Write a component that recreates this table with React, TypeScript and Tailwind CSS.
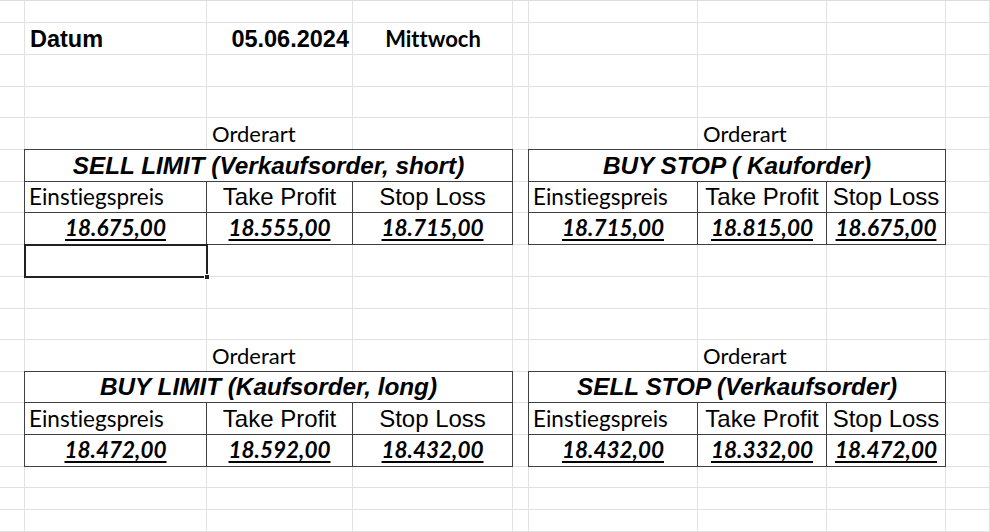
import React from "react";

// Excel-artige Tabelle: Spaltenbreiten und Zeilenhöhen wie im Screenshot
const COLS = 9;
const ROWS = 19;

const arial = "font-['Liberation_Sans',Arial,sans-serif]";
const calibri = "font-['Lato','Open_Sans',sans-serif] [font-variant-ligatures:none]";

interface OrderTable {
  pos: string;
  title: string;
  entry: string;
  tp: string;
  sl: string;
}

const tables: OrderTable[] = [
  { pos: "col-start-2 col-span-3 row-start-6 row-span-3", title: "SELL LIMIT (Verkaufsorder, short)", entry: "18.675,00", tp: "18.555,00", sl: "18.715,00" },
  { pos: "col-start-6 col-span-3 row-start-6 row-span-3", title: "BUY STOP ( Kauforder)", entry: "18.715,00", tp: "18.815,00", sl: "18.675,00" },
  { pos: "col-start-2 col-span-3 row-start-13 row-span-3", title: "BUY LIMIT (Kaufsorder, long)", entry: "18.472,00", tp: "18.592,00", sl: "18.432,00" },
  { pos: "col-start-6 col-span-3 row-start-13 row-span-3", title: "SELL STOP (Verkaufsorder)", entry: "18.432,00", tp: "18.332,00", sl: "18.472,00" },
];

const gridTpl =
  "grid grid-cols-[25px_182px_146px_160px_16px_169px_129px_119px_44px] grid-rows-[22px_32px_32px_31px_32px_32px_31px_32px_32px_32px_31px_32px_31px_32px_32px_21px_22px_22px_1px]";

const cell = "-mt-px -ml-px border border-[#404040] bg-white flex items-end leading-[24px] pb-[3px] text-black";

function Table({ t }: { t: OrderTable }) {
  return (
    <div className={`${t.pos} grid grid-cols-subgrid grid-rows-subgrid`}>
      <div className={`${cell} col-span-3 justify-center ${arial} font-bold italic text-[24.3px] whitespace-nowrap`}>{t.title}</div>
      <div className={`${cell} pl-[4px] ${calibri} text-[22.5px]`}>Einstiegspreis</div>
      <div className={`${cell} justify-center ${arial} text-[24px] whitespace-nowrap`}>Take Profit</div>
      <div className={`${cell} justify-center ${arial} text-[24px] whitespace-nowrap`}>Stop Loss</div>
      {[t.entry, t.tp, t.sl].map((v, i) => (
        <div key={i} className={`${cell} justify-center pb-[4px] ${calibri} font-bold italic text-[22.5px]`}>
          <span className="underline decoration-[1.5px] underline-offset-[3px]">{v}</span>
        </div>
      ))}
    </div>
  );
}

export default function App() {
  return (
    <div className="w-[990px] h-[532px] overflow-hidden bg-white grid border-t border-[#dcdcdc]">
      {/* Gitternetzlinien */}
      <div className={`${gridTpl} col-start-1 row-start-1`}>
        {Array.from({ length: COLS * ROWS }).map((_, i) => (
          <div key={i} className={i >= COLS * (ROWS - 1) ? "" : "border-r border-b border-[#e1e1e1]"} />
        ))}
      </div>

      {/* Inhalt */}
      <div className={`${gridTpl} col-start-1 row-start-1`}>
        <div className={`col-start-2 row-start-2 flex items-end pl-[5px] pb-[4px] leading-[24px] ${arial} font-bold text-[23.5px]`}>Datum</div>
        <div className={`col-start-3 row-start-2 flex items-end justify-end pr-[4px] pb-[4px] leading-[24px] ${arial} font-bold text-[23.5px]`}>05.06.2024</div>
        <div className={`col-start-4 row-start-2 flex items-end justify-center pb-[4px] leading-[24px] ${calibri} font-bold text-[22px]`}>Mittwoch</div>

        <div className={`col-start-3 row-start-5 flex items-end pl-[5px] pb-[4px] leading-[24px] ${calibri} text-[22px]`}>Orderart</div>
        <div className={`col-start-7 row-start-5 flex items-end pl-[5px] pb-[4px] leading-[24px] ${calibri} text-[22px]`}>Orderart</div>
        <div className={`col-start-3 row-start-12 flex items-end pl-[5px] pb-[4px] leading-[24px] ${calibri} text-[22px]`}>Orderart</div>
        <div className={`col-start-7 row-start-12 flex items-end pl-[5px] pb-[4px] leading-[24px] ${calibri} text-[22px]`}>Orderart</div>

        {tables.map((t) => (
          <Table key={t.title} t={t} />
        ))}

        {/* aktive Zelle */}
        <div className="col-start-2 row-start-9 -m-px border-2 border-[#212121] relative">
          <div className="absolute -right-[4px] -bottom-[4px] w-[6px] h-[6px] bg-[#212121] border border-white" />
        </div>
      </div>
    </div>
  );
}
